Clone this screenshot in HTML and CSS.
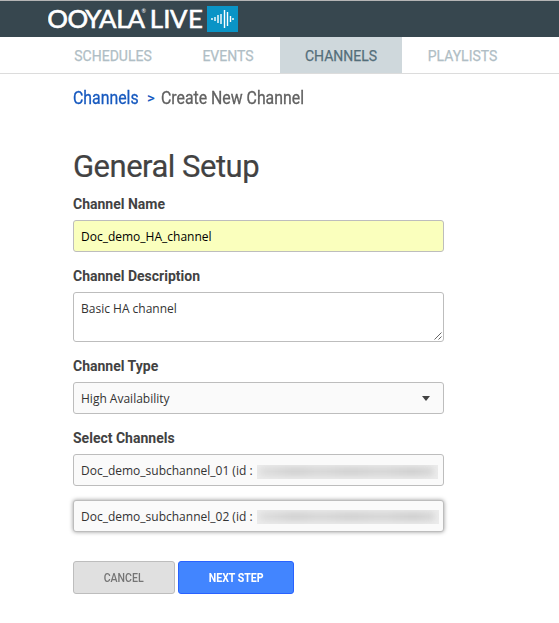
FILE: index.html
```html
<!DOCTYPE html>
<html lang="en">
<head>
<meta charset="utf-8">
<title>Ooyala Live - Create New Channel</title>
<link rel="stylesheet" href="styles.css">
</head>
<body>
<header class="topbar">
  <svg class="logo" width="160" height="36" viewBox="0 0 160 36" role="img" aria-label="Ooyala Live">
    <text class="logo-text" y="27" x="-.8 19.6 37.6 51.4 68.8 80">OOYALA</text>
    <text class="logo-reg" x="94" y="11.5">®</text>
    <text class="logo-text" y="27" x="102.5 116 122.8 140.8">LIVE</text>
  </svg>
  <svg class="wave" width="31" height="26" viewBox="0 0 31 26">
    <path d="M5 12v2M8 11v4M11 9v8M14 8v10M17.5 4v18M20.5 6v14M23.5 10v6M26 12v2" stroke="#fff" stroke-width="1.4"/>
  </svg>
</header>
<nav class="tabs">
  <a class="tab schedules">SCHEDULES</a>
  <a class="tab events">EVENTS</a>
  <a class="tab active">CHANNELS</a>
  <a class="tab playlists">PLAYLISTS</a>
</nav>
<main class="page">
  <div class="crumbs"><a class="crumb-link">Channels</a><span class="crumb-sep">&gt;</span><span class="crumb-current">Create New Channel</span></div>
  <h1 class="title">General Setup</h1>
  <form class="form">
    <label class="label">Channel Name</label>
    <div class="field filled">Doc_demo_HA_channel</div>
    <label class="label">Channel Description</label>
    <div class="field area">Basic HA channel
      <svg class="grip" width="8" height="8" viewBox="0 0 8 8"><path d="M.5 7.5l7-7M4.5 7.5l3-3" stroke="#555" stroke-width=".9"/></svg>
    </div>
    <label class="label">Channel Type</label>
    <div class="field select">High Availability<span class="caret"></span></div>
    <label class="label">Select Channels</label>
    <div class="field select sub">Doc_demo_subchannel_01 (id :<span class="redacted first"><span class="smear"></span></span></div>
    <div class="field select focused">Doc_demo_subchannel_02 (id :<span class="redacted second"><span class="smear"></span></span></div>
    <div class="actions">
      <button type="button" class="btn cancel"><span class="btn-text">CANCEL</span></button>
      <button type="button" class="btn next"><span class="btn-text">NEXT STEP</span></button>
    </div>
  </form>
</main>
</body>
</html>
```
FILE: styles.css
```css
* { box-sizing: border-box; }
body { margin: 0; background: #fff; color: #424242; font-family: Roboto, sans-serif; }
.topbar { height: 37px; border-top: 1px solid #b5b5b5; background: #37474f; display: flex; padding-left: 48px; }
.logo { flex: none; width: 159px; }
.logo-text { font: 26px Lato, sans-serif; fill: #fff; stroke: #fff; stroke-width: .6; }
.logo-reg { font: 5.5px Lato, sans-serif; fill: #fff; }
.wave { background: #0a94c6; margin-top: 5px; }
.tabs { height: 37px; border-bottom: 1px solid #dcdcdc; display: flex; padding-left: 50px; gap: 2px; }
.tab { height: 36px; display: flex; align-items: center; justify-content: center; padding-top: 2px; font-size: 14px; line-height: 18px; color: #b0bec5; -webkit-text-stroke: .25px currentColor; }
.schedules { width: 126px; }
.events { width: 100px; }
.active { width: 122px; background: #cfd8dc; color: #546e7a; }
.playlists { width: 117px; }
.page { padding: 12px 0 0 73px; }
.crumbs { display: flex; height: 24px; line-height: 24px; font-size: 18px; white-space: nowrap; }
.crumb-link { width: 74px; color: #1659bf; transform: scaleX(.88); transform-origin: 0 50%; -webkit-text-stroke: .3px #1659bf; }
.crumb-sep { width: 14px; color: #1659bf; font-size: 15px; font-weight: 500; }
.crumb-current { color: #616161; transform: scaleX(.88); transform-origin: 0 50%; -webkit-text-stroke: .3px #616161; }
.title { margin: 35px 0 0; height: 44px; line-height: 44px; font-size: 31px; font-weight: 400; letter-spacing: -.5px; -webkit-text-stroke: .2px currentColor; }
.form { width: 371px; }
.label { display: block; height: 25px; line-height: 18px; font-size: 14px; font-weight: 700; margin-top: 15px; }
.form .label:first-child { margin-top: 6px; }
.field { position: relative; height: 32px; border: 1px solid #bdbdbd; border-radius: 3px; padding: 0 7px; line-height: 31px; font-family: "Open Sans", sans-serif; font-size: 12px; color: #333; white-space: nowrap; }
.filled { background: #faffbd; color: #000; }
.area { height: 50px; line-height: 31px; }
.select { background: #fafafa; }
.grip { position: absolute; right: 1px; bottom: 1px; }
.caret { position: absolute; right: 13px; top: 13px; border: 4px solid transparent; border-top: 5px solid #424242; border-bottom: 0; }
.sub { margin-bottom: 14px; }
.focused { box-shadow: 0 0 4px rgba(0, 0, 0, .4); }
.redacted { position: absolute; left: 183px; top: 10px; height: 14px; width: 181px; background: #ececec; overflow: hidden; }
.second { top: 9px; width: 182px; }
.smear { position: absolute; left: 2px; right: 4px; top: 2px; height: 9px; border-radius: 4px; background: linear-gradient(90deg, #ddd, #cfcfcf 20%, #d6d6d6 35%, #cfcfcf 52%, #d5d5d5 70%, #cdcdcd 88%, #d7d7d7); filter: blur(3px); }
.actions { display: flex; gap: 3px; margin-top: 29px; }
.btn { height: 33px; padding: 0; border-radius: 3px; font-family: Roboto, sans-serif; font-size: 12px; line-height: 30px; }
.btn-text { display: inline-block; transform: scaleX(.88); }
.cancel { width: 102px; border: 1px solid #bdbdbd; background: #e0e0e0; color: #757575; font-weight: 500; }
.next { width: 116px; border: 1px solid #2962ff; background: #4285ff; color: #fff; font-weight: 700; }
```
